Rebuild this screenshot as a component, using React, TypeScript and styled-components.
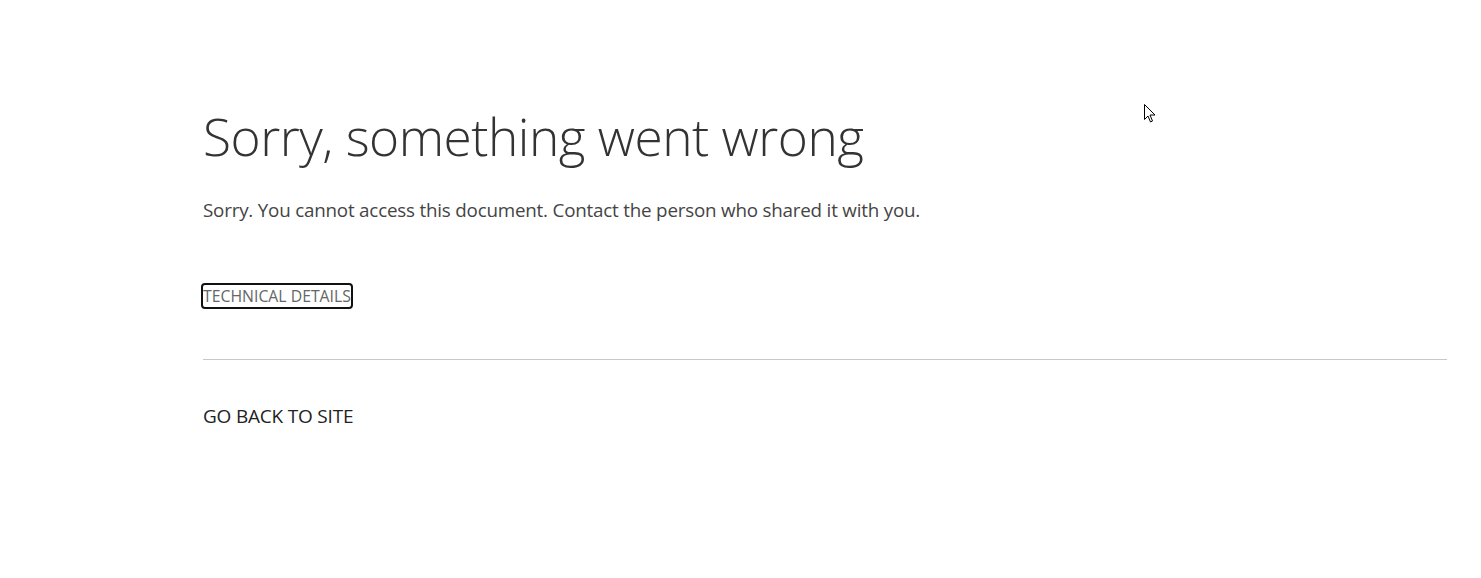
import React from "react";
import styled, { createGlobalStyle } from "styled-components";

const Global = createGlobalStyle`
  html, body { margin: 0; padding: 0; background: #fff; }
  body { font-family: "Open Sans", "Liberation Sans", sans-serif; }
`;

const Page = styled.main`
  position: relative;
  min-height: 578px;
  padding: 100px 34px 0 203px;
  box-sizing: border-box;
`;

const Title = styled.h1`
  margin: 0;
  font-family: "Open Sans", sans-serif;
  font-weight: 300;
  font-size: 51.4px;
  line-height: 72px;
  color: #333;
  letter-spacing: -0.5px;
`;

const Message = styled.p`
  margin: 25px 0 0;
  font-size: 18.8px;
  line-height: 26px;
  color: #444;
  letter-spacing: -0.2px;
`;

const DetailsButton = styled.button`
  margin: 60px 0 0 -2px;
  padding: 0;
  background: none;
  border: 2px solid #111;
  border-radius: 4px;
  font-family: "Open Sans", sans-serif;
  font-size: 15.8px;
  line-height: 22px;
  color: #666;
  cursor: pointer;
  display: block;
`;

const Divider = styled.hr`
  margin: 50px 0 0;
  border: 0;
  border-top: 1px solid #c8c8c8;
`;

const BackLink = styled.a`
  display: inline-block;
  margin-top: 44px;
  font-size: 19px;
  line-height: 24px;
  color: #222;
  text-decoration: none;
  letter-spacing: -0.2px;
`;

const Pointer = styled.svg`
  position: absolute;
  left: 1144px;
  top: 104px;
`;

export default function App() {
  return (
    <>
      <Global />
      <Page>
        <Title>Sorry, something went wrong</Title>
        <Message>Sorry. You cannot access this document. Contact the person who shared it with you.</Message>
        <DetailsButton>TECHNICAL DETAILS</DetailsButton>
        <Divider />
        <BackLink href="#">GO BACK TO SITE</BackLink>
        <Pointer width="14" height="20" viewBox="0 0 14 20">
          <path d="M0.5 0.5 L0.5 15.5 L4 12 L6.5 18 L8.5 17 L6 11 L11 11 Z" fill="#fff" stroke="#000" strokeWidth="1" strokeLinejoin="round" />
        </Pointer>
      </Page>
    </>
  );
}
